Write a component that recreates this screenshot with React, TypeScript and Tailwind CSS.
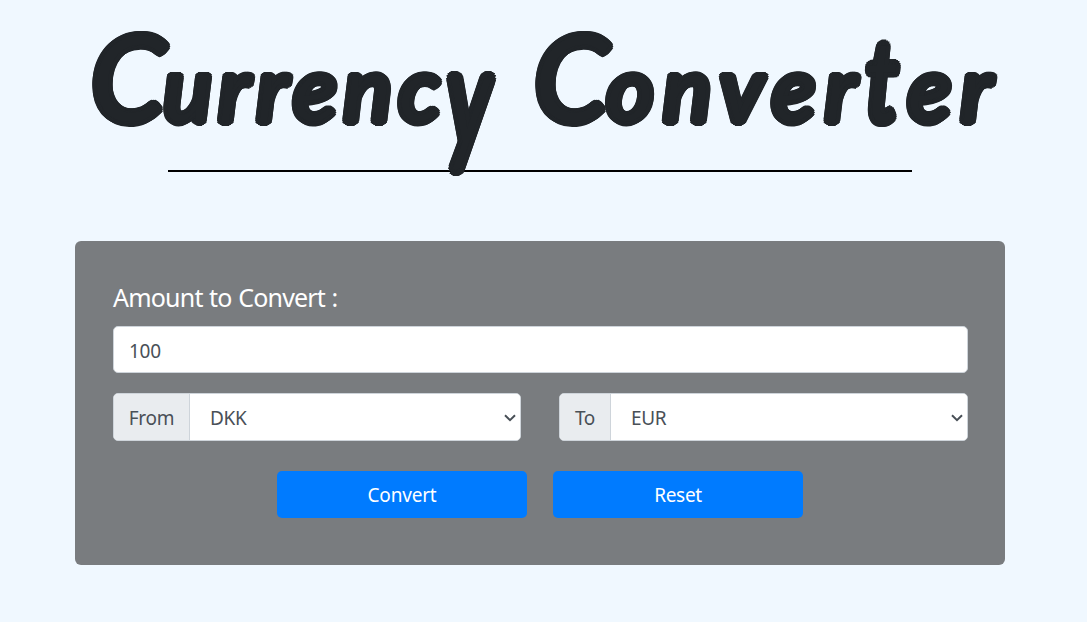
import { useState } from "react";

function Chevron() {
  return (
    <svg
      className="pointer-events-none absolute right-[3px] top-[19px] h-[10px] w-[14px]"
      viewBox="0 0 14 10"
      fill="none"
      stroke="#495057"
      strokeWidth="2"
    >
      <path d="M2 2.2 7 7.2 12 2.2" />
    </svg>
  );
}

type CurrencySelectProps = {
  label: string;
  labelWidth: string;
  value: string;
  onChange: (value: string) => void;
};

function CurrencySelect({ label, labelWidth, value, onChange }: CurrencySelectProps) {
  return (
    <div className="flex h-12 flex-1 overflow-hidden rounded-[5px] border border-[#ced4da] bg-white text-[#495057]">
      <span
        className={`flex shrink-0 items-center justify-center border-r border-[#ced4da] bg-[#e9ecef] pt-[3px] ${labelWidth}`}
      >
        {label}
      </span>
      <div className="relative flex-1">
        <select
          className="h-full w-full appearance-none bg-white pl-5 pt-[3px] outline-none"
          value={value}
          onChange={(e) => onChange(e.target.value)}
        >
          <option>DKK</option>
          <option>EUR</option>
        </select>
        <Chevron />
      </div>
    </div>
  );
}

export default function App() {
  const [amount, setAmount] = useState("100");
  const [from, setFrom] = useState("DKK");
  const [to, setTo] = useState("EUR");

  return (
    <div className="h-[622px] overflow-hidden bg-[#f0f8ff] font-['Noto_Sans',sans-serif] text-[19px] tracking-[-0.3px]">
      <header className="relative h-[170px] pl-[91px] pt-[6px]">
        <h1 className="flex h-[140px] items-baseline gap-[37px] whitespace-nowrap font-[Lato,sans-serif] text-[90px] font-normal italic leading-[140px] text-[#212529] [text-shadow:4.5px_0_#212529,4.2px_1.7px_#212529,3.2px_3.2px_#212529,1.7px_4.2px_#212529,0_4.5px_#212529,-1.7px_4.2px_#212529,-3.2px_3.2px_#212529,-4.2px_1.7px_#212529,-4.5px_0_#212529,-4.2px_-1.7px_#212529,-3.2px_-3.2px_#212529,-1.7px_-4.2px_#212529,0_-4.5px_#212529,1.7px_-4.2px_#212529,3.2px_-3.2px_#212529,4.2px_-1.7px_#212529]">
          <span className="w-[406px] tracking-[7.4px]">
            <span className="text-[118px] tracking-[-1px]">C</span>urrenc
            <span className="inline-block origin-[0_53px] scale-y-[1.48]">y</span>
          </span>
          <span className="w-[463px] tracking-[10px]">
            <span className="text-[118px] tracking-[-1px]">C</span>onver
            <span className="inline-block origin-[0_106px] scale-y-[1.25]">t</span>er
          </span>
        </h1>
      </header>
      <div className="ml-[168px] h-[2px] w-[744px] bg-black" />
      <main className="ml-[75px] mt-[69px] h-[324px] w-[930px] rounded-[6px] bg-[#797c7f] px-[38px] pt-[38px]">
        <label
          htmlFor="amount"
          className="block h-[47px] text-[25px] leading-[36px] tracking-[-0.8px] text-white [word-spacing:0.8px]"
        >
          Amount to Convert :
        </label>
        <input
          id="amount"
          className="block h-[47px] w-[855px] rounded-[5px] border border-[#ced4da] bg-white px-[15px] pt-[2px] text-[#495057] outline-none"
          value={amount}
          onChange={(e) => setAmount(e.target.value)}
        />
        <div className="mt-5 flex w-[855px] gap-[38px]">
          <div className="flex w-[408px]">
            <CurrencySelect label="From" labelWidth="w-[76px]" value={from} onChange={setFrom} />
          </div>
          <div className="flex w-[409px]">
            <CurrencySelect label="To" labelWidth="w-[51px]" value={to} onChange={setTo} />
          </div>
        </div>
        <div className="mt-[30px] flex justify-center gap-[26px] text-white">
          <button className="h-[47px] w-[250px] rounded-[5px] bg-[#007bff] pt-px tracking-[-0.2px]">Convert</button>
          <button className="h-[47px] w-[250px] rounded-[5px] bg-[#007bff] pt-px" onClick={() => setAmount("100")}>
            Reset
          </button>
        </div>
      </main>
    </div>
  );
}
